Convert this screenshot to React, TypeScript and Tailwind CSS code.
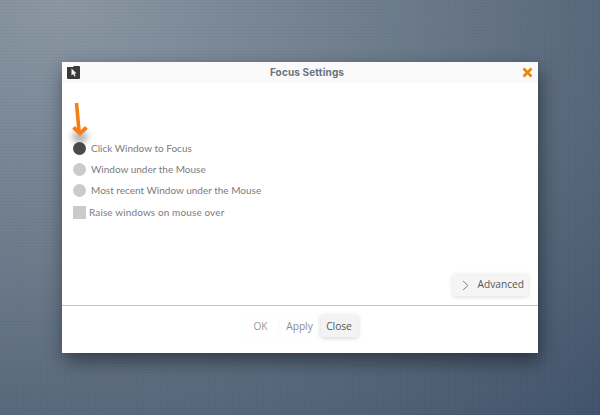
const options = [
  { label: "Click Window to Focus", active: true },
  { label: "Window under the Mouse", active: false },
  { label: "Most recent Window under the Mouse", active: false },
];

function AppIcon() {
  return (
    <svg width="13" height="13" viewBox="0 0 13 13" className="shrink-0">
      <path d="M0 1h6l1-1h5a1 1 0 0 1 1 1v11a1 1 0 0 1-1 1H1a1 1 0 0 1-1-1z" fill="#3a3a3c" />
      <path d="M4.5 2.5v7l1.7-1.5 1.2 2.6 1.2-.6-1.2-2.4h2.2z" fill="#f4f4f4" />
    </svg>
  );
}

function Arrow() {
  return (
    <svg width="24" height="44" viewBox="0 0 24 44" className="absolute left-[6px] top-[19px] overflow-visible">
      <ellipse cx="12" cy="35" rx="8" ry="6" fill="#444" opacity="0.4" className="blur-[3px]" />
      <path d="M8.5 1 L11 29" stroke="#f57f17" strokeWidth="3.6" fill="none" />
      <path d="M5.5 25.5 L12 31.5 L18.5 25.5" stroke="#f57f17" strokeWidth="3.8" fill="none" />
    </svg>
  );
}

export default function App() {
  return (
    <div className="w-[600px] h-[415px] overflow-hidden pt-[62px] pl-[62px] bg-[repeating-linear-gradient(0deg,rgba(0,0,0,0.025)_0px,rgba(0,0,0,0.025)_1px,transparent_1px,transparent_3px),repeating-linear-gradient(90deg,rgba(255,255,255,0.025)_0px,rgba(255,255,255,0.025)_1px,transparent_1px,transparent_3px),radial-gradient(ellipse_at_10%_0%,#8a96a3_0%,#6b7a8a_45%,#40526a_100%)] font-['Open_Sans',sans-serif]">
      <div className="w-[476px] h-[291px] bg-white flex flex-col shadow-[2px_8px_18px_rgba(0,0,0,0.45)]">
        <header className="h-[21px] shrink-0 bg-[#fafafa] flex items-center justify-between pl-[5px] pr-[5px]">
          <AppIcon />
          <span className="ml-[12px] text-[10px] font-bold tracking-[0.15px] text-[#6b7280] font-['Inter',sans-serif]">Focus Settings</span>
          <svg width="11" height="11" viewBox="0 0 11 11" className="shrink-0">
            <path d="M1.5 1.5l8 8M9.5 1.5l-8 8" stroke="#e8860c" strokeWidth="2.6" />
          </svg>
        </header>

        <main className="relative flex-1 flex flex-col pt-[59px] pl-[11px] pr-[10px] pb-[9px]">
          <Arrow />
          <div className="flex flex-col gap-[8px]">
            {options.map((o) => (
              <div key={o.label} className="flex items-center gap-[5px] h-[13px]">
                <span className={`w-[13px] h-[13px] rounded-full ${o.active ? "bg-[#4a4a4c]" : "bg-[#cbcbcb]"}`} />
                <span className="text-[10px] text-[#7c7c7c] font-['Lato',sans-serif]">{o.label}</span>
              </div>
            ))}
            <div className="flex items-center gap-[3px] h-[13px] mt-[1px]">
              <span className="w-[13px] h-[13px] bg-[#cbcbcb]" />
              <span className="text-[10px] text-[#7c7c7c] tracking-[0.12px] font-['Lato',sans-serif]">Raise windows on mouse over</span>
            </div>
          </div>
          <button className="mt-auto self-end h-[22px] w-[75px] flex items-center justify-between pl-[9px] pr-[4px] bg-[#f5f5f5] rounded-[2px] shadow-[0_1px_5px_rgba(0,0,0,0.14)] text-[10.2px] text-[#555]">
            <svg width="7" height="11" viewBox="0 0 7 11">
              <path d="M1 1l5 4.5L1 10" stroke="#777" strokeWidth="0.9" fill="none" />
            </svg>
            Advanced
          </button>
        </main>

        <footer className="h-[48px] shrink-0 border-t border-[#c4c4c4] flex items-start justify-center gap-[3px] pt-[9px] text-[10.2px]">
          <button className="w-[36px] h-[22px] pt-[1px] text-[#9a9a9a] rounded-[2px] shadow-[0_0_2px_rgba(0,0,0,0.05)]">OK</button>
          <button className="w-[36px] h-[22px] pt-[1px] text-[#8c8c8c] rounded-[2px] shadow-[0_0_2px_rgba(0,0,0,0.05)]">Apply</button>
          <button className="w-[37px] h-[22px] pt-[1px] text-[#555] bg-[#f3f3f3] rounded-[2px] shadow-[0_1px_5px_rgba(0,0,0,0.18)]">Close</button>
        </footer>
      </div>
    </div>
  );
}
